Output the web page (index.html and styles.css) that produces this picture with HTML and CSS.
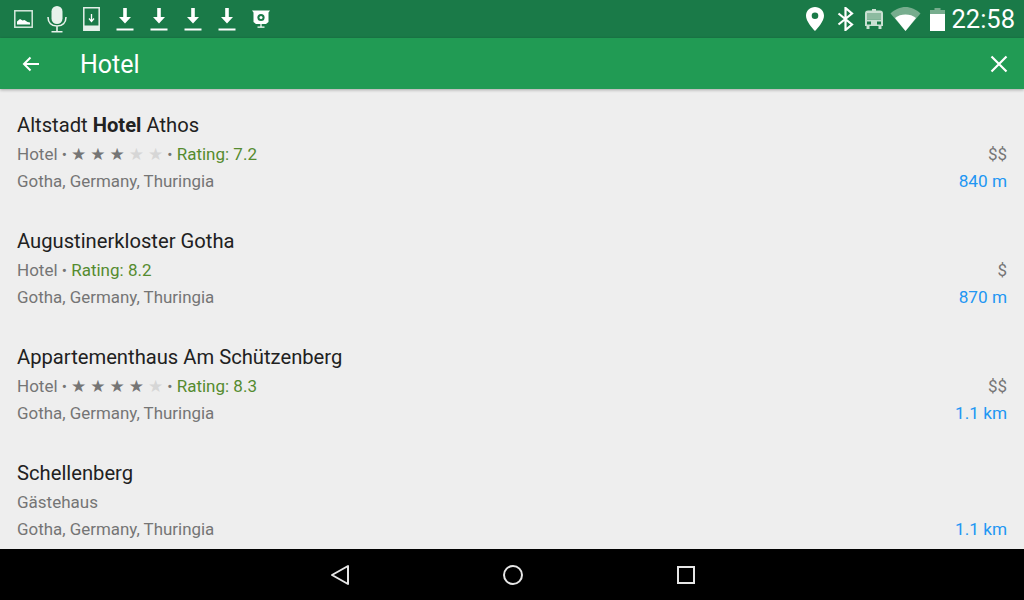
FILE: index.html
```html
<!DOCTYPE html>
<html>
<head>
    <title>Hotel</title>
    <meta name="viewport" content="width=device-width, initial-scale=1">
    <link rel="stylesheet" href="styles.css">
</head>
<body>
    <header class="status-bar">
        <div class="status-icons">
            <svg width="19" height="18" viewBox="0 0 19 18"><rect x="0.800" y="0.800" width="17.400" height="16.400" fill="none" stroke="#d8eadf" stroke-width="1.500"/><path d="M3 14.500v-3l3-2.500 2.500 1.500 2-.5 3 2 2.500.5v2z" fill="#fff"/></svg>
            <svg width="20" height="27" viewBox="0 0 20 27"><rect x="4.500" y="0" width="11" height="18" rx="5.500" fill="#e8f2ec"/><path d="M1 11c0 5.500 3.500 9 9 9s9-3.500 9-9M10 20v5.500M4.500 25.800h11" fill="none" stroke="#e8f2ec" stroke-width="1.600"/></svg>
            <svg width="17" height="24" viewBox="0 0 17 24"><path d="M.800.800h15.400v22.400H.800z" fill="none" stroke="#e4f0e9" stroke-width="1.500"/><path d="M1 18.500h15v5H1z" fill="#e4f0e9"/><path d="M8.500 7v7.500M6 11.500l2.500 3 2.500-3" fill="none" stroke="#fff" stroke-width="1.300"/></svg>
            <svg width="18" height="23" viewBox="0 0 18 23"><path d="M7.200 0h3.600v9H15l-6 6.500L3 9h4.200zM.500 20.500h17v2H.500z" fill="#fff"/></svg>
            <svg width="18" height="23" viewBox="0 0 18 23"><path d="M7.200 0h3.600v9H15l-6 6.500L3 9h4.200zM.500 20.500h17v2H.500z" fill="#fff"/></svg>
            <svg width="18" height="23" viewBox="0 0 18 23"><path d="M7.200 0h3.600v9H15l-6 6.500L3 9h4.200zM.500 20.500h17v2H.500z" fill="#fff"/></svg>
            <svg width="18" height="23" viewBox="0 0 18 23"><path d="M7.200 0h3.600v9H15l-6 6.500L3 9h4.200zM.500 20.500h17v2H.500z" fill="#fff"/></svg>
            <svg width="18" height="18" viewBox="0 0 18 18"><path d="M0 .500h18L16.500 2.500V12l-2.500 2H4l-2.500-2V2.500z" fill="#fff"/><circle cx="9" cy="7.500" r="3.600" fill="#1a7a48"/><circle cx="9" cy="7.500" r="1.500" fill="#fff"/><path d="M9 14v3M5.500 17.200h7" stroke="#fff" stroke-width="1.200"/></svg>
        </div>
        <div class="status-right">
            <svg width="24" height="24" viewBox="-3 0 24 24"><path fill-rule="evenodd" d="M9 0c5 0 9 3.800 9 8.800C18 14 12 21 9 24 6 21 0 14 0 8.800 0 3.800 4 0 9 0zm0 5.500a3.300 3.300 0 100 6.600 3.300 3.300 0 000-6.600z" fill="#fff"/></svg>
            <svg width="29" height="24" viewBox="-6.500 0 29 24"><path d="M1 6.500l13.500 11L8 23V1l6.500 5.500L1 17.500" fill="none" stroke="#fff" stroke-width="2.200"/></svg>
            <svg width="20" height="20" viewBox="0 0 20 20"><path fill-rule="evenodd" d="M4 1.500h4V0h4v1.500h4c2 0 3 1 3 3V17h-1.500v3h-3v-3h-9v3h-3v-3H1V4.500c0-2 1-3 3-3zM3 4v6.500h14V4zM3 12.500v3h4v-3zm10 0v3h4v-3z" fill="#c9e0d2"/><path d="M3 4h14v6.500H3z" fill="#8cbba0"/></svg>
            <svg width="35" height="24" viewBox="-2.500 0 35 24"><path d="M0 6.500C4 2.500 10 0 15 0s11 2.500 15 6.500L15 24z" fill="#77ad8e"/><path d="M4.500 11C7.500 8.500 11 7.500 15 7.500s7.500 1 10.500 3.500L15 24z" fill="#fff"/></svg>
            <svg width="20" height="23" viewBox="-3 0 20 23"><path d="M4.500 0h6v2H15v5H0V2h4.500z" fill="#77ad8e"/><path d="M0 6h15v17H0z" fill="#fff"/></svg>
            <span class="clock">22:58</span>
        </div>
    </header>
    <div class="app-bar">
        <svg class="back" width="18" height="16" viewBox="0 0 18 16"><path d="M17 8H2M8.500 1.500L2 8l6.500 6.500" fill="none" stroke="#fff" stroke-width="2"/></svg>
        <h1>Hotel</h1>
        <svg class="close" width="18" height="18" viewBox="0 0 18 18"><path d="M1.500 1.500l15 15M16.500 1.500l-15 15" fill="none" stroke="#fff" stroke-width="2.200"/></svg>
    </div>
    <main class="results">
        <div class="result">
            <div class="result-main">
                <div class="name">Altstadt <b>Hotel</b> Athos</div>
                <div class="meta">Hotel <i class="dot">•</i><span class="stars">★★★<em>★★</em></span><i class="dot">•</i> <span class="rating">Rating: 7.2</span></div>
                <div class="place">Gotha, Germany, Thuringia</div>
            </div>
            <div class="result-side"><div class="price">$$</div><div class="dist">840 m</div></div>
        </div>
        <div class="result">
            <div class="result-main">
                <div class="name">Augustinerkloster Gotha</div>
                <div class="meta">Hotel <i class="dot">•</i> <span class="rating">Rating: 8.2</span></div>
                <div class="place">Gotha, Germany, Thuringia</div>
            </div>
            <div class="result-side"><div class="price">$</div><div class="dist">870 m</div></div>
        </div>
        <div class="result">
            <div class="result-main">
                <div class="name">Appartementhaus Am Schützenberg</div>
                <div class="meta">Hotel <i class="dot">•</i><span class="stars">★★★★<em>★</em></span><i class="dot">•</i> <span class="rating">Rating: 8.3</span></div>
                <div class="place">Gotha, Germany, Thuringia</div>
            </div>
            <div class="result-side"><div class="price">$$</div><div class="dist">1.1 km</div></div>
        </div>
        <div class="result">
            <div class="result-main">
                <div class="name">Schellenberg</div>
                <div class="meta">Gästehaus</div>
                <div class="place">Gotha, Germany, Thuringia</div>
            </div>
            <div class="result-side"><div class="price"></div><div class="dist">1.1 km</div></div>
        </div>
    </main>
    <nav class="nav-bar">
        <svg width="20" height="22" viewBox="0 0 20 22"><path d="M18 2v18L2 11z" fill="none" stroke="#e6e6e6" stroke-width="2" stroke-linejoin="round"/></svg>
        <svg width="22" height="22" viewBox="0 0 22 22"><circle cx="11" cy="11" r="9" fill="none" stroke="#e6e6e6" stroke-width="2"/></svg>
        <svg width="20" height="20" viewBox="0 0 20 20"><path d="M2 2h16v16H2z" fill="none" stroke="#e6e6e6" stroke-width="2"/></svg>
    </nav>
</body>
</html>
```

FILE: styles.css
```css
* {
    margin: 0;
    padding: 0;
    box-sizing: border-box;
}

html, body {
    height: 100%;
    overflow: hidden;
}

body {
    width: 1024px;
    height: 600px;
    display: flex;
    flex-direction: column;
    background: #eeeeee;
    color: #212121;
    font-family: Roboto, sans-serif;
}

.status-bar {
    height: 38px;
    background: #1a7a48;
    display: flex;
    align-items: center;
    justify-content: space-between;
    padding: 0 9px 0 6px;
}

.status-icons {
    display: grid;
    grid-template-columns: repeat(8, 34px);
    justify-items: center;
    align-items: center;
}

.status-right {
    display: flex;
    align-items: center;
    gap: 4px;
}

.clock {
    color: #fff;
    font-size: 25.500px;
}

.app-bar {
    height: 51px;
    background: #219b54;
    display: flex;
    align-items: center;
    padding: 0 16px 0 22px;
    box-shadow: 0 1px 3px rgba(0, 0, 0, 0.3);
    position: relative;
}

.app-bar h1 {
    color: #fff;
    font-size: 25px;
    font-weight: 400;
    margin-left: 40px;
    padding-top: 2px;
    flex: 1;
}

.results {
    flex: 1;
    overflow: hidden;
    padding: 22px 17px 0;
}

.result {
    height: 116px;
    display: flex;
    justify-content: space-between;
}

.name {
    font-size: 20.200px;
    line-height: 28px;
}

.meta, .place, .price, .dist {
    font-size: 17px;
    line-height: 27px;
    height: 27px;
    color: #757575;
}

.meta {
    margin-top: 2px;
}

.place {
    font-size: 16.920px;
}

.dot {
    font-style: normal;
    font-size: 15.500px;
}

.stars {
    font-family: "DejaVu Sans", sans-serif;
    font-size: 17px;
    letter-spacing: 4px;
    margin-left: 4px;
}

.stars em {
    font-style: normal;
    color: #d6d6d6;
}

.rating {
    color: #558b2f;
}

.result-side {
    text-align: right;
    padding-top: 30px;
}

.dist {
    font-size: 17.200px;
    color: #2196f3;
}

.nav-bar {
    height: 51px;
    background: #000;
    display: flex;
    align-items: center;
    justify-content: center;
    gap: 152px;
    padding-left: 2px;
}
```
